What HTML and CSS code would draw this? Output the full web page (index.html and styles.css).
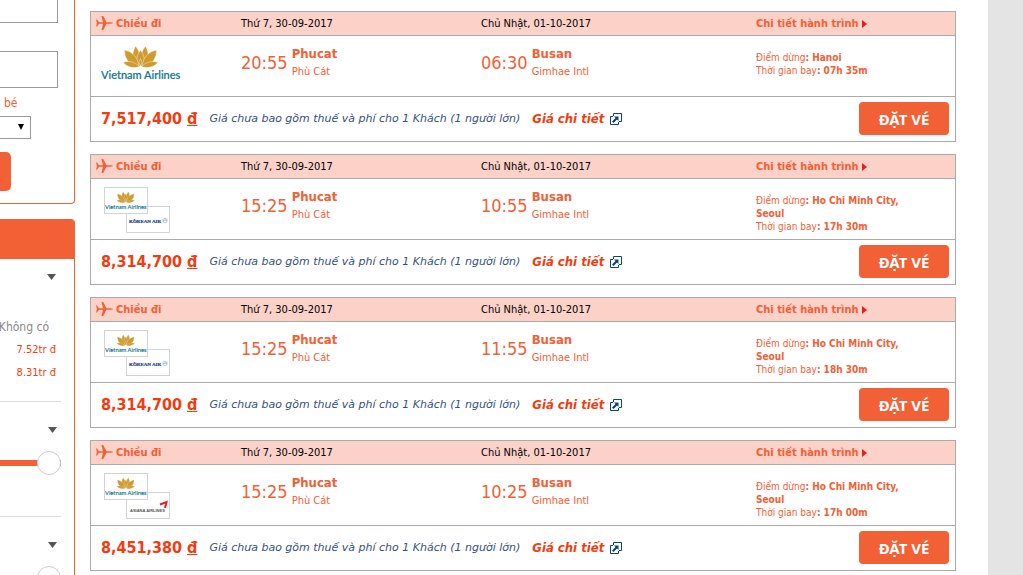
FILE: index.html
```html
<!DOCTYPE html>
<html lang="vi">
<head>
    <meta charset="UTF-8">
    <meta name="viewport" content="width=device-width, initial-scale=1.0">
    <title>Vé máy bay Phucat - Busan</title>
    <link rel="stylesheet" href="styles.css">
</head>
<body>
    <svg class="defs" aria-hidden="true">
        <symbol id="plane" viewBox="0 0 17 14">
            <path d="M0 3.500h1L3 6.200h4L5.500 0H7.200L10.500 6.200h3.500Q17 6.500 17 7T14 7.800H10.500L7.200 14H5.500L7 7.800H3L1 10.500H0L1 7z"/>
        </symbol>
        <symbol id="lotus" viewBox="0 0 35 22">
            <g fill="#cf9a2f" stroke="#fff" stroke-width=".4">
                <path d="M12.500 0Q7 10 12 20L18 20Q19 8 12.500 0z"/>
                <path d="M22.500 0Q28 10 23 20L17 20Q16 8 22.500 0z"/>
                <path d="M17.500 4Q11.500 12 15 20H20Q23.500 12 17.500 4z"/>
                <path d="M1.500 4Q1.500 17 14 21L16 19Q13 6 1.500 4z"/>
                <path d="M33.500 4Q33.500 17 21 21L19 19Q22 6 33.500 4z"/>
                <path d="M0 16.500Q8 13 17 20.500 7 24 0 16.500z"/>
                <path d="M35 16.500Q27 13 18 20.500 28 24 35 16.500z"/>
                <path d="M17.500 12.500Q14.500 16 17.500 20 20.500 16 17.500 12.500z"/>
            </g>
        </symbol>
        <symbol id="vna" viewBox="0 0 80 36">
            <use href="#lotus" x="22" y="1" width="35" height="22"/>
            <text x="0" y="34" font-family="Lato, sans-serif" font-size="11" font-weight="500" fill="#0f7494" stroke="#0f7494" stroke-width=".2">Vietnam Airlines</text>
        </symbol>
        <symbol id="korean" viewBox="0 0 42 24">
            <text x="2" y="15" font-family="Liberation Serif, serif" font-size="5" font-weight="bold" fill="#123f8c" stroke="#123f8c" stroke-width=".2">KOREAN AIR</text>
            <circle cx="7.500" cy="12.500" r="1" fill="#e0394b"/>
            <circle cx="38" cy="13" r="2.300" fill="none" stroke="#a9bbdc" stroke-width=".8"/>
            <path d="M36 13.500q2-2 4-.5" fill="none" stroke="#7d97c7" stroke-width=".8"/>
        </symbol>
        <symbol id="asiana" viewBox="0 0 42 24">
            <text x="3" y="18" font-family="Liberation Sans, sans-serif" font-size="4" font-weight="bold" fill="#555">ASIANA AIRLINES</text>
            <path d="M33 11 39.500 8.500 38 14.500" fill="none" stroke="#f01c1c" stroke-width="2"/>
        </symbol>
        <symbol id="popup" viewBox="0 0 12 12">
            <path d="M3.500 3V.5h8v8H9M3 3.500H.5v8h8V9" fill="none" stroke="#0c4670"/>
            <path d="M4 3.500h4.500V8L7 6.500 3.500 10 2 8.500 5.500 5z" fill="#0c4670"/>
        </symbol>
    </svg>

    <div class="page">
        <aside class="sidebar">
            <form class="search">
                <input class="field" type="text" aria-label="Điểm đi">
                <input class="field" type="text" aria-label="Điểm đến">
                <label class="infant-label" for="infants">bé</label>
                <div class="select-wrap">
                    <select id="infants"><option></option></select>
                </div>
                <button class="search-btn" type="submit" aria-label="Tìm"></button>
            </form>
            <div class="filter">
                <div class="filter-head"></div>
                <section class="filter-box stops">
                    <button class="toggle" type="button" aria-label="Điểm dừng"></button>
                    <p class="none">Không có</p>
                    <a class="from" href="#">7.52tr đ</a>
                    <a class="from" href="#">8.31tr đ</a>
                </section>
                <section class="filter-box">
                    <button class="toggle" type="button" aria-label="Giờ đi"></button>
                    <input class="range" type="range" value="100" aria-label="Giờ đi">
                </section>
                <section class="filter-box">
                    <button class="toggle" type="button" aria-label="Giờ đến"></button>
                    <input class="range" type="range" value="100" aria-label="Giờ đến">
                </section>
            </div>
        </aside>

        <main class="results">
            <article class="flight">
                <header class="row head">
                    <div class="dir"><svg class="plane"><use href="#plane"/></svg>Chiều đi</div>
                    <div>Thứ 7, 30-09-2017</div>
                    <div>Chủ Nhật, 01-10-2017</div>
                    <a class="more" href="#">Chi tiết hành trình</a>
                </header>
                <div class="row info">
                    <div><svg class="logo"><use href="#vna"/></svg></div>
                    <div class="point"><span class="time">20:55</span><div><b>Phucat</b><span>Phù Cát</span></div></div>
                    <div class="point"><span class="time">06:30</span><div><b>Busan</b><span>Gimhae Intl</span></div></div>
                    <div class="stop">Điểm dừng<b>: Hanoi</b><br>Thời gian bay<b>: 07h 35m</b></div>
                </div>
                <footer class="foot">
                    <strong class="price">7,517,400 <u>đ</u></strong>
                    <em class="note">Giá chưa bao gồm thuế và phí cho 1 Khách (1 người lớn)</em>
                    <a class="detail" href="#">Giá chi tiết<svg><use href="#popup"/></svg></a>
                    <button class="book" type="button">ĐẶT VÉ</button>
                </footer>
            </article>

            <article class="flight">
                <header class="row head">
                    <div class="dir"><svg class="plane"><use href="#plane"/></svg>Chiều đi</div>
                    <div>Thứ 7, 30-09-2017</div>
                    <div>Chủ Nhật, 01-10-2017</div>
                    <a class="more" href="#">Chi tiết hành trình</a>
                </header>
                <div class="row info">
                    <div class="logos"><svg><use href="#korean"/></svg><svg class="over"><use href="#vna"/></svg></div>
                    <div class="point"><span class="time">15:25</span><div><b>Phucat</b><span>Phù Cát</span></div></div>
                    <div class="point"><span class="time">10:55</span><div><b>Busan</b><span>Gimhae Intl</span></div></div>
                    <div class="stop">Điểm dừng<b>: Ho Chi Minh City, Seoul</b><br>Thời gian bay<b>: 17h 30m</b></div>
                </div>
                <footer class="foot">
                    <strong class="price">8,314,700 <u>đ</u></strong>
                    <em class="note">Giá chưa bao gồm thuế và phí cho 1 Khách (1 người lớn)</em>
                    <a class="detail" href="#">Giá chi tiết<svg><use href="#popup"/></svg></a>
                    <button class="book" type="button">ĐẶT VÉ</button>
                </footer>
            </article>

            <article class="flight">
                <header class="row head">
                    <div class="dir"><svg class="plane"><use href="#plane"/></svg>Chiều đi</div>
                    <div>Thứ 7, 30-09-2017</div>
                    <div>Chủ Nhật, 01-10-2017</div>
                    <a class="more" href="#">Chi tiết hành trình</a>
                </header>
                <div class="row info">
                    <div class="logos"><svg><use href="#korean"/></svg><svg class="over"><use href="#vna"/></svg></div>
                    <div class="point"><span class="time">15:25</span><div><b>Phucat</b><span>Phù Cát</span></div></div>
                    <div class="point"><span class="time">11:55</span><div><b>Busan</b><span>Gimhae Intl</span></div></div>
                    <div class="stop">Điểm dừng<b>: Ho Chi Minh City, Seoul</b><br>Thời gian bay<b>: 18h 30m</b></div>
                </div>
                <footer class="foot">
                    <strong class="price">8,314,700 <u>đ</u></strong>
                    <em class="note">Giá chưa bao gồm thuế và phí cho 1 Khách (1 người lớn)</em>
                    <a class="detail" href="#">Giá chi tiết<svg><use href="#popup"/></svg></a>
                    <button class="book" type="button">ĐẶT VÉ</button>
                </footer>
            </article>

            <article class="flight">
                <header class="row head">
                    <div class="dir"><svg class="plane"><use href="#plane"/></svg>Chiều đi</div>
                    <div>Thứ 7, 30-09-2017</div>
                    <div>Chủ Nhật, 01-10-2017</div>
                    <a class="more" href="#">Chi tiết hành trình</a>
                </header>
                <div class="row info">
                    <div class="logos"><svg><use href="#asiana"/></svg><svg class="over"><use href="#vna"/></svg></div>
                    <div class="point"><span class="time">15:25</span><div><b>Phucat</b><span>Phù Cát</span></div></div>
                    <div class="point"><span class="time">10:25</span><div><b>Busan</b><span>Gimhae Intl</span></div></div>
                    <div class="stop">Điểm dừng<b>: Ho Chi Minh City, Seoul</b><br>Thời gian bay<b>: 17h 00m</b></div>
                </div>
                <footer class="foot">
                    <strong class="price">8,451,380 <u>đ</u></strong>
                    <em class="note">Giá chưa bao gồm thuế và phí cho 1 Khách (1 người lớn)</em>
                    <a class="detail" href="#">Giá chi tiết<svg><use href="#popup"/></svg></a>
                    <button class="book" type="button">ĐẶT VÉ</button>
                </footer>
            </article>
        </main>
    </div>
</body>
</html>
```
FILE: styles.css
```css
*{
    margin: 0;
    padding: 0;
    box-sizing: border-box;
}
html{
    background: #e4e4e4;
}
body{
    font-family: Tahoma, "DejaVu Sans Condensed", "Noto Sans", sans-serif;
    font-size: 11px;
    color: #000;
    height: 100vh;
    overflow: hidden;
}
a{
    text-decoration: none;
}
.defs{
    display: none;
}
.page{
    display: flex;
    align-items: flex-start;
    gap: 15px;
    min-height: 100vh;
    margin-right: 35px;
    padding-right: 32px;
    background: #fff;
}

/* left column */
.sidebar{
    flex: 0 0 75px;
    overflow: hidden;
}
.search{
    display: flex;
    flex-direction: column;
    align-items: flex-start;
    height: 204px;
    border: solid #f26035;
    border-width: 0 1px 1px 0;
    border-radius: 0 0 4px 0;
}
.field{
    width: 58px;
    height: 37px;
    margin-bottom: 14px;
    border: 1px solid #999;
    border-left: 0;
    flex-shrink: 0;
}
.field:first-child{
    height: 23px;
    margin-bottom: 28px;
    border-top: 0;
}
.field + .field{
    margin-bottom: 8px;
}
.infant-label{
    padding-left: 4px;
    margin-bottom: 6px;
    font-size: 12px;
    line-height: 14px;
    color: #f26035;
}
.select-wrap{
    position: relative;
    width: 31px;
    margin-bottom: 13px;
}
.select-wrap::after{
    content: "";
    position: absolute;
    right: 7px;
    top: 8px;
    border: solid transparent;
    border-width: 6px 3px 0;
    border-top-color: #000;
    pointer-events: none;
}
.select-wrap select{
    display: block;
    appearance: none;
    width: 100%;
    height: 23px;
    border: 1px solid #999;
    border-left: 0;
    background: #fff;
}
.search-btn{
    width: 11px;
    height: 39px;
    border: 0;
    border-radius: 0 5px 5px 0;
    background: #f26035;
}
.filter{
    height: 356px;
    margin-top: 15px;
    border-right: 1px solid #f26035;
    border-radius: 0 4px 0 0;
    overflow: hidden;
}
.filter-head{
    height: 40px;
    background: #f26035;
}
.filter-box{
    display: flex;
    flex-direction: column;
    align-items: flex-end;
    width: 61px;
    height: 115px;
    padding: 25px 0 0;
    border-bottom: 1px solid #ddd;
}
.stops{
    height: 143px;
    padding: 15px 5px 0 0;
}
.toggle{
    width: 9px;
    height: 6px;
    margin-right: 4px;
    border: 0;
    background: #555;
    clip-path: polygon(0 0, 100% 0, 50% 100%);
}
.stops .toggle{
    margin-right: 0;
}
.none{
    margin: 38px 7px 2px 0;
    font-size: 12px;
    line-height: 18px;
    white-space: nowrap;
    color: #888;
}
.from{
    line-height: 23px;
    color: #f23c0f;
}
.range{
    appearance: none;
    width: 150px;
    height: 24px;
    margin: 18px 0 0;
    background: linear-gradient(#f26035, #f26035) center / 100% 6px no-repeat;
}
.range::-webkit-slider-thumb{
    appearance: none;
    width: 24px;
    height: 24px;
    border: 1px solid #ccc;
    border-radius: 50%;
    background: #fff;
}

/* flight list */
.results{
    flex: 1;
    display: flex;
    flex-direction: column;
    gap: 12px;
    padding-top: 11px;
}
.flight{
    border: 1px solid #aaa;
}
.row{
    display: grid;
    grid-template-columns: 150px 240px 275px 1fr;
    border-bottom: 1px solid #aaa;
}
.head{
    align-items: center;
    height: 24px;
    padding-bottom: 1px;
    background: #fbd1c8;
}
.dir,
.more{
    display: flex;
    align-items: center;
    font-weight: bold;
    color: #f26035;
}
.plane{
    width: 17px;
    height: 14px;
    margin: 0 3px 0 5px;
    fill: #f26035;
}
.more::after{
    content: "";
    margin: 2px 0 0 3px;
    border: solid transparent;
    border-width: 4px 0 4px 5px;
    border-left-color: #e0201b;
}
.info{
    height: 61px;
    color: #f26035;
}
.logo{
    width: 80px;
    height: 36px;
    margin: 9px 0 0 10px;
}
.logos{
    position: relative;
    padding: 27px 0 0 35px;
}
.logos svg{
    display: block;
    width: 44px;
    height: 27px;
    border: 1px solid #d3d3d3;
    background: #fff;
}
.logos .over{
    position: absolute;
    left: 13px;
    top: 8px;
}
.point{
    display: flex;
    gap: 4px;
    padding-top: 9px;
}
.time{
    font-size: 18px;
    line-height: 36px;
}
.point b,
.point div span{
    display: block;
    line-height: 18px;
}
.point b{
    font-size: 13px;
}
.stop{
    width: 170px;
    padding-top: 15px;
    font-size: 10px;
    line-height: 13px;
}
.foot{
    display: flex;
    align-items: center;
    height: 44px;
    padding: 0 6px 1px 10px;
}
.price{
    font-size: 16px;
    color: #f23c0f;
}
.note{
    margin: 0 12px;
    font-family: Tahoma, "DejaVu Sans", sans-serif;
    color: #36507f;
}
.detail{
    display: flex;
    align-items: center;
    gap: 6px;
    font-size: 13px;
    font-style: italic;
    font-weight: bold;
    color: #f23c0f;
}
.detail svg{
    width: 12px;
    height: 12px;
}
.book{
    width: 90px;
    height: 33px;
    margin-left: auto;
    border: 0;
    border-radius: 4px;
    background: #f26035;
    color: #fff;
    font: bold 15px Tahoma, "Noto Sans", sans-serif;
    cursor: pointer;
}
```
